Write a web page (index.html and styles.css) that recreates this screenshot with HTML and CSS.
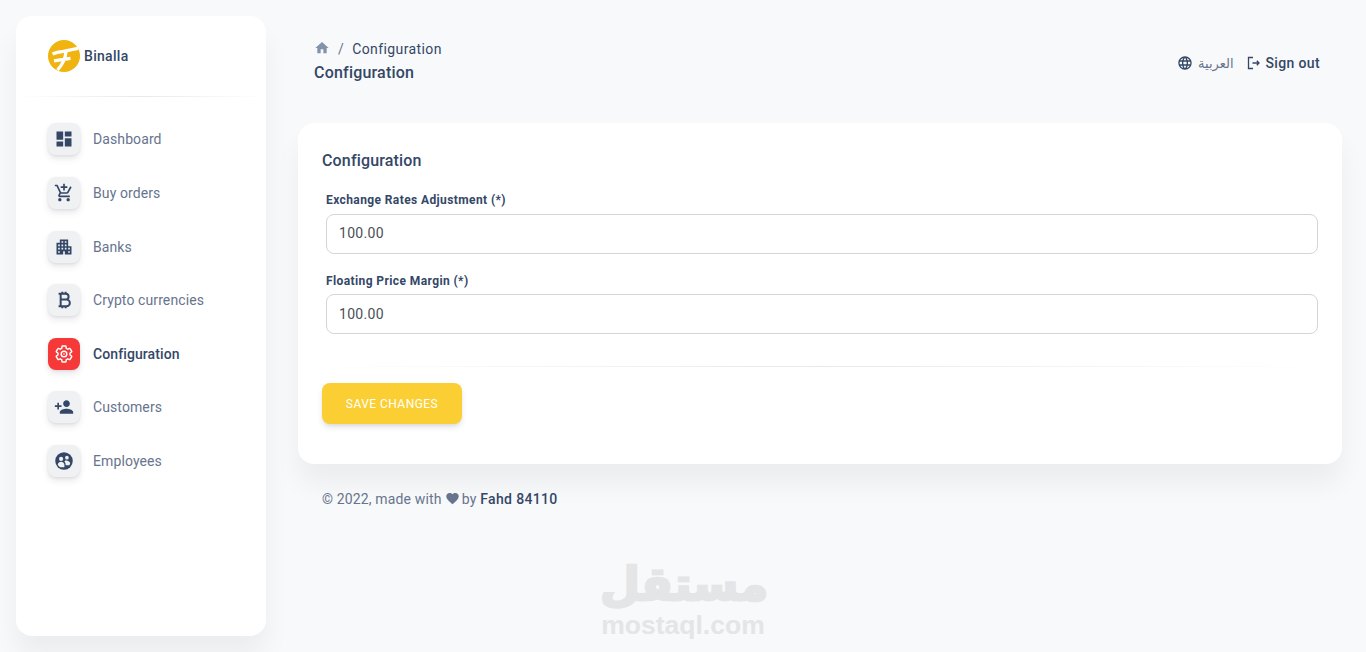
FILE: index.html
```html
<!DOCTYPE html>
<html lang="en">

<head>
  <meta charset="UTF-8">
  <meta name="viewport" content="width=device-width, initial-scale=1.0">
  <title>Configuration</title>
  <link rel="stylesheet" href="styles.css">
</head>

<body>
  <aside class="sidebar">
    <div class="brand">
      <svg class="brand-logo" viewBox="0 0 32 32">
        <circle cx="16" cy="16" r="16" fill="#f0b310" />
        <path d="M4.500 14c3-1.500 7-2.300 11-2.700L30 8.300M6 20.800l16.500-2.400M18 11.500c-.5 7-3.500 13-8.500 18.500" fill="none" stroke="#fff" stroke-width="3.300" />
      </svg>
      <span>Binalla</span>
    </div>
    <hr class="brand-line">
    <nav class="menu">
      <a class="menu-item">
        <span class="menu-icon"><svg viewBox="0 0 24 24"><path d="M3 13h8V3H3v10zm0 8h8v-6H3v6zm10 0h8V11h-8v10zm0-18v6h8V3h-8z" /></svg></span>
        Dashboard
      </a>
      <a class="menu-item">
        <span class="menu-icon"><svg viewBox="0 0 24 24"><path d="M11 9h2V6h3V4h-3V1h-2v3H8v2h3v3zm-4 9c-1.100 0-1.990.9-1.990 2S5.900 22 7 22s2-.9 2-2-.9-2-2-2zm10 0c-1.100 0-1.990.9-1.990 2s.89 2 1.990 2 2-.9 2-2-.9-2-2-2zm-9.830-3.250l.03-.12.9-1.630h7.450c.75 0 1.410-.41 1.750-1.030l3.860-7.010L19.420 4h-.01l-1.100 2-2.760 5H8.530l-.13-.27L6.160 6l-.95-2-.94-2H1v2h2l3.600 7.590-1.350 2.450c-.16.28-.25.61-.25.96 0 1.100.9 2 2 2h12v-2H7.420c-.13 0-.25-.11-.25-.25z" /></svg></span>
        Buy orders
      </a>
      <a class="menu-item">
        <span class="menu-icon"><svg viewBox="0 0 24 24"><path d="M17 11V3H7v4H3v14h8v-4h2v4h8V11h-4zM7 19H5v-2h2v2zm0-4H5v-2h2v2zm0-4H5V9h2v2zm4 4H9v-2h2v2zm0-4H9V9h2v2zm0-4H9V5h2v2zm4 8h-2v-2h2v2zm0-4h-2V9h2v2zm0-4h-2V5h2v2zm4 12h-2v-2h2v2zm0-4h-2v-2h2v2z" /></svg></span>
        Banks
      </a>
      <a class="menu-item">
        <span class="menu-icon"><svg viewBox="0 0 24 24"><path d="M8 4.500h6a3.500 3.500 0 0 1 0 7H8h7a3.800 3.800 0 0 1 0 8H8M8 4.500v15M5.500 4.500H9M5.500 19.500H9M10 2v2.500M14 2v2.500M10 19.500V22M14 19.500V22" fill="none" stroke="#344767" stroke-width="2.400" /></svg></span>
        Crypto currencies
      </a>
      <a class="menu-item active">
        <span class="menu-icon"><svg viewBox="0 0 24 24"><path d="M19.140 12.940c.04-.3.06-.61.06-.94 0-.32-.02-.64-.07-.94l2.030-1.580c.18-.14.23-.41.12-.61l-1.920-3.320c-.12-.22-.37-.29-.59-.22l-2.390.96c-.5-.38-1.030-.7-1.620-.94l-.36-2.540c-.04-.24-.24-.41-.48-.41h-3.840c-.24 0-.43.17-.47.41l-.36 2.540c-.59.24-1.130.57-1.620.94l-2.390-.96c-.22-.08-.47 0-.59.22L2.740 8.870c-.12.21-.08.47.12.61l2.030 1.580c-.05.3-.09.63-.09.94s.02.64.07.94l-2.030 1.580c-.18.14-.23.41-.12.61l1.920 3.320c.12.22.37.29.59.22l2.390-.96c.5.38 1.030.7 1.620.94l.36 2.540c.05.24.24.41.48.41h3.840c.24 0 .44-.17.47-.41l.36-2.540c.59-.24 1.130-.56 1.620-.94l2.390.96c.22.08.47 0 .59-.22l1.920-3.320c.12-.22.07-.47-.12-.61l-2.010-1.580z" /><circle cx="12" cy="12" r="3.400" /><circle class="gear-dot" cx="12" cy="12" r="1" /></svg></span>
        Configuration
      </a>
      <a class="menu-item">
        <span class="menu-icon"><svg viewBox="0 0 24 24"><path d="M15 12c2.210 0 4-1.790 4-4s-1.790-4-4-4-4 1.790-4 4 1.790 4 4 4zm-9-2V7H4v3H1v2h3v3h2v-3h3v-2H6zm9 4c-2.670 0-8 1.340-8 4v2h16v-2c0-2.660-5.330-4-8-4z" /></svg></span>
        Customers
      </a>
      <a class="menu-item">
        <span class="menu-icon"><svg viewBox="0 0 24 24"><circle cx="12" cy="12" r="10.500" /><circle cx="8.500" cy="9.500" r="2.500" fill="#f0f1f3" /><circle cx="15.500" cy="8" r="2.200" fill="#f0f1f3" /><path d="M4.500 16.500c.5-2.500 2.200-3.500 4-3.500s3.500 1 4 3.500v3h-5a9 9 0 0 1-3-3zM13.500 11.500c2.500-.5 5 .5 6 3l-1 2.500h-4.500c0-2-.5-3.500-1.500-4.500z" fill="#f0f1f3" /></svg></span>
        Employees
      </a>
    </nav>
  </aside>

  <main class="content">
    <header class="topbar">
      <div>
        <div class="crumbs">
          <svg class="crumb-home" viewBox="0 0 24 24"><path d="M10 20v-6h4v6h5v-8h3L12 3 2 12h3v8z" /></svg>
          <span class="crumb-sep">/</span>
          <span>Configuration</span>
        </div>
        <h1 class="page-title">Configuration</h1>
      </div>
      <div class="top-actions">
        <a class="lang">
          <svg viewBox="0 0 24 24"><path d="M11.990 2C6.470 2 2 6.480 2 12s4.470 10 9.990 10C17.520 22 22 17.520 22 12S17.520 2 11.990 2zm6.930 6h-2.950c-.32-1.250-.78-2.450-1.380-3.560 1.840.63 3.370 1.910 4.330 3.560zM12 4.040c.83 1.200 1.480 2.530 1.910 3.960h-3.820c.43-1.430 1.080-2.760 1.910-3.960zM4.260 14C4.100 13.360 4 12.690 4 12s.1-1.360.26-2h3.380c-.08.66-.14 1.320-.14 2 0 .68.06 1.340.14 2H4.260zm.82 2h2.950c.32 1.250.78 2.450 1.380 3.560-1.840-.63-3.370-1.900-4.330-3.560zm2.950-8H5.080c.96-1.660 2.490-2.930 4.330-3.560C8.810 5.550 8.350 6.750 8.030 8zM12 19.960c-.83-1.200-1.480-2.530-1.910-3.960h3.820c-.43 1.430-1.080 2.760-1.910 3.960zM14.340 14H9.660c-.09-.66-.16-1.320-.16-2 0-.68.07-1.350.16-2h4.680c.09.65.16 1.320.16 2 0 .68-.07 1.340-.16 2zm.25 5.560c.6-1.110 1.060-2.310 1.380-3.560h2.950c-.96 1.650-2.490 2.930-4.330 3.560zM16.360 14c.08-.66.14-1.320.14-2 0-.68-.06-1.340-.14-2h3.380c.16.64.26 1.310.26 2s-.1 1.360-.26 2h-3.380z" /></svg>
          <span lang="ar">العربية</span>
        </a>
        <a class="signout">
          <svg viewBox="0 0 14 14"><path d="M6 1.500H1.500v11H6M5.500 7H12M9.800 4.800 12 7 9.800 9.200" /></svg>
          Sign out
        </a>
      </div>
    </header>

    <section class="card">
      <h2 class="card-title">Configuration</h2>
      <div class="field">
        <label for="rates">Exchange Rates Adjustment (*)</label>
        <input id="rates" value="100.00">
      </div>
      <div class="field">
        <label for="margin">Floating Price Margin (*)</label>
        <input id="margin" value="100.00">
      </div>
      <hr class="card-line">
      <button class="save">Save changes</button>
    </section>

    <footer class="foot">
      &copy; 2022, made with
      <svg viewBox="0 0 24 24"><path d="M12 21.350l-1.450-1.320C5.400 15.360 2 12.280 2 8.500 2 5.420 4.420 3 7.500 3c1.740 0 3.410.81 4.500 2.090C13.090 3.810 14.760 3 16.500 3 19.580 3 22 5.420 22 8.500c0 3.780-3.400 6.860-8.550 11.540L12 21.350z" /></svg>
      by <b>Fahd 84110</b>
    </footer>
  </main>

  <div class="watermark">
    <div class="wm-ar" lang="ar">مستقل</div>
    <div class="wm-en">mostaql.com</div>
  </div>
</body>

</html>
```

FILE: styles.css
```css
* {
  box-sizing: border-box;
}

html,
body {
  height: 652px;
}

body {
  margin: 0;
  padding: 16px 24px 16px 16px;
  display: flex;
  gap: 32px;
  overflow: hidden;
  background-color: #f8f9fa;
  font-family: Roboto, "DejaVu Sans", sans-serif;
  color: #344767;
}

.sidebar {
  width: 250px;
  flex-shrink: 0;
  height: 620px;
  background: white;
  border-radius: 16px;
  box-shadow: 0 20px 27px rgba(0, 0, 0, 0.05);
}

.brand {
  display: flex;
  align-items: center;
  gap: 4px;
  padding: 0 32px;
  height: 80px;
  font-size: 14px;
  font-weight: 500;
  letter-spacing: 0.3px;
}

.brand-logo {
  width: 32px;
  height: 32px;
}

.brand-line,
.card-line {
  height: 1px;
  margin: 0;
  border: 0;
  background: linear-gradient(to right, rgba(52, 71, 103, 0), rgba(52, 71, 103, 0.12), rgba(52, 71, 103, 0));
}

.menu {
  display: flex;
  flex-direction: column;
  gap: 21.600px;
  padding: 26.450px 32px 0;
}

.menu-item {
  display: flex;
  align-items: center;
  gap: 13px;
  font-size: 14px;
  letter-spacing: 0.1px;
  color: #67748e;
}

.menu-item.active {
  font-weight: 500;
  color: #344767;
}

.menu-icon {
  width: 32px;
  height: 32px;
  display: flex;
  align-items: center;
  justify-content: center;
  border-radius: 8px;
  background: #f0f1f3;
  box-shadow: 0 4px 6px rgba(50, 50, 93, 0.1), 0 1px 3px rgba(0, 0, 0, 0.08);
}

.menu-icon svg {
  width: 20px;
  height: 20px;
  fill: #344767;
}

.active .menu-icon {
  background: #f53939;
}

.active .menu-icon svg {
  fill: none;
  stroke: #fff;
  stroke-width: 1.700;
}

.active .menu-icon .gear-dot {
  fill: #fff;
  stroke: none;
}

.content {
  flex: 1;
  min-width: 0;
}

.topbar {
  display: flex;
  align-items: center;
  justify-content: space-between;
  height: 91px;
  padding: 0 22px 0 16px;
}

.crumbs {
  display: flex;
  align-items: center;
  font-size: 14px;
  height: 20px;
  letter-spacing: 0.4px;
}

.crumb-home {
  width: 16px;
  height: 16px;
  margin-top: -2px;
  fill: #8392ab;
}

.crumb-sep {
  margin: 0 8px;
  color: #67748e;
}

.page-title {
  margin: 2px 0 0;
  font-size: 16px;
  font-weight: 500;
  line-height: 24px;
  letter-spacing: 0.2px;
}

.top-actions {
  display: flex;
  align-items: center;
  gap: 13px;
  margin-top: 3px;
  font-size: 14px;
  letter-spacing: 0.35px;
}

.top-actions a {
  display: flex;
  align-items: center;
  gap: 5px;
}

.lang svg {
  width: 16px;
  height: 16px;
  fill: #344767;
}

.signout svg {
  width: 14px;
  height: 14px;
  fill: none;
  stroke: #344767;
  stroke-width: 1.300;
}

.lang {
  font-size: 13px;
  color: #67748e;
}

.signout {
  font-weight: 500;
}

.card {
  height: 341px;
  margin-top: 16px;
  padding: 24px;
  background: white;
  border-radius: 16px;
  box-shadow: 0 20px 27px rgba(0, 0, 0, 0.05);
}

.card-title {
  margin: 0 0 17px;
  font-size: 16px;
  font-weight: 500;
  line-height: 27px;
  letter-spacing: 0.15px;
}

.field {
  padding: 0 0 0 4px;
  margin-bottom: 17px;
}

.field label {
  display: block;
  margin-bottom: 5px;
  font-size: 12px;
  font-weight: 700;
  line-height: 18px;
  letter-spacing: 0.4px;
}

.field + .field label {
  margin-top: 18px;
  margin-bottom: 4px;
}

.field input {
  display: block;
  width: 992px;
  height: 40px;
  padding: 7px 12px 9px;
  border: 1px solid #d2d6da;
  border-radius: 8px;
  font: 14px Roboto, sans-serif;
  color: #495057;
  letter-spacing: 0.3px;
}

.field + .field input {
  padding: 8px 12px;
}

.card-line {
  margin-top: 32px;
}

.save {
  display: block;
  width: 140px;
  height: 41px;
  margin-top: 16px;
  border: none;
  border-radius: 8px;
  background-color: #fbcf33;
  color: white;
  font: 400 12px Roboto, sans-serif;
  letter-spacing: 0.45px;
  text-transform: uppercase;
  box-shadow: 0 4px 7px -1px rgba(0, 0, 0, 0.11), 0 2px 4px -1px rgba(0, 0, 0, 0.07);
}

.foot {
  padding: 25px 24px 0;
  font-size: 14px;
  line-height: 20px;
  letter-spacing: 0.15px;
  color: #67748e;
}

.foot svg {
  width: 15px;
  height: 15px;
  margin-right: -2px;
  fill: #67748e;
  vertical-align: -2px;
}

.foot b {
  font-weight: 500;
  letter-spacing: 0.35px;
  color: #344767;
}

/* watermark over the page */
.watermark {
  position: absolute;
  left: 600px;
  top: 554px;
  width: 166px;
  text-align: center;
  color: #e4e5e6;
}

.wm-ar {
  font: 700 46px/60px "DejaVu Sans", sans-serif;
  -webkit-text-stroke: 2.500px #e4e5e6;
}

.wm-en {
  font: 700 26.500px/22px "Liberation Sans", sans-serif;
}
```
